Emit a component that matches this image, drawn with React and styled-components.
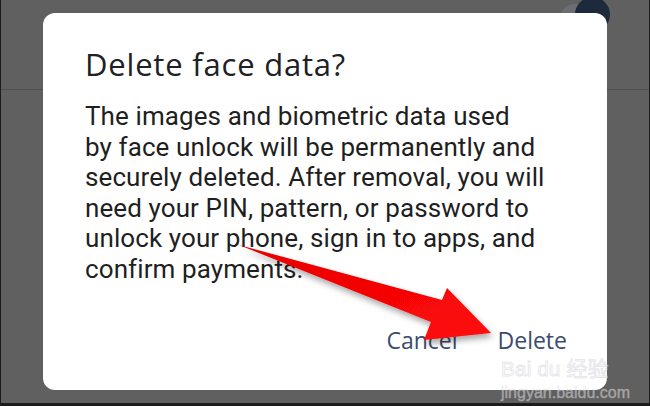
import React from "react";
import styled, { createGlobalStyle } from "styled-components";

const GlobalStyle = createGlobalStyle`
  html, body {
    margin: 0;
    padding: 0;
    background: #5f5f5f;
  }
  * { box-sizing: border-box; }
`;

const Screen = styled.div`
  position: relative;
  width: 650px;
  height: 406px;
  overflow: hidden;
  background: #606060;
  border: 1px solid #1c1c1c;
  border-top: none;
  border-bottom-width: 3px;
  font-family: Roboto, "Liberation Sans", sans-serif;
`;

const SettingsRow = styled.div`
  height: 90px;
  border-bottom: 1px solid #4f4f4f;
`;

const ToggleTrack = styled.div`
  position: absolute;
  top: 4px;
  left: 560px;
  width: 42px;
  height: 26px;
  border-radius: 13px;
  background: #6b6d71;
`;

const ToggleThumb = styled.div`
  position: absolute;
  top: -3px;
  left: 574px;
  width: 35px;
  height: 35px;
  border-radius: 50%;
  background: #1d2a3b;
`;

const Scrim = styled.div`
  position: absolute;
  inset: 0;
  display: flex;
  padding: 13px 42px 13px 42px;
`;

const Dialog = styled.div`
  flex: 1;
  background: #ffffff;
  border-radius: 12px;
  padding: 33px 40px 0 42px;
  display: flex;
  flex-direction: column;
`;

const Title = styled.h2`
  margin: 0;
  font-family: "Open Sans", Roboto, sans-serif;
  font-weight: 400;
  font-size: 31px;
  line-height: 36px;
  color: #202124;
  letter-spacing: 0.8px;
`;

const Body = styled.p`
  margin: 19px 0 0;
  font-size: 26px;
  line-height: 30.6px;
  color: #1f1f1f;
  letter-spacing: 0.1px;
`;

const Actions = styled.div`
  display: flex;
  justify-content: flex-end;
  gap: 40px;
  margin-top: 41px;
`;

const ActionButton = styled.button`
  border: none;
  background: none;
  padding: 0;
  font-family: "Open Sans", Roboto, sans-serif;
  font-weight: 500;
  font-size: 23px;
  line-height: 28px;
  color: #3c4b6e;
`;

const ArrowLayer = styled.svg`
  position: absolute;
  inset: 0;
  pointer-events: none;
`;

const Watermark = styled.div`
  position: absolute;
  left: 500px;
  top: 358px;
  display: flex;
  flex-direction: column;
  align-items: flex-start;
  color: rgba(255, 255, 255, 0.4);
  -webkit-text-stroke: 1px rgba(200, 200, 210, 0.45);
  pointer-events: none;
`;

const WatermarkLogo = styled.span`
  font-family: "Liberation Sans", "Noto Sans CJK SC", sans-serif;
  font-size: 21px;
  line-height: 22px;
`;

const WatermarkUrl = styled.span`
  font-family: "Liberation Sans", sans-serif;
  font-size: 16px;
  line-height: 16px;
  margin-top: 5px;
  -webkit-text-stroke: 0.5px rgba(200, 200, 210, 0.5);
`;

export default function App() {
  return (
    <>
      <GlobalStyle />
      <Screen>
        <SettingsRow />
        <ToggleTrack />
        <ToggleThumb />
        <Scrim>
          <Dialog>
            <Title>Delete face data?</Title>
            <Body>
              The images and biometric data used
              <br />
              by face unlock will be permanently and
              <br />
              securely deleted. After removal, you will
              <br />
              need your PIN, pattern, or password to
              <br />
              unlock your phone, sign in to apps, and
              <br />
              confirm payments.
            </Body>
            <Actions>
              <ActionButton>Cancel</ActionButton>
              <ActionButton>Delete</ActionButton>
            </Actions>
          </Dialog>
        </Scrim>
        <ArrowLayer width="650" height="406" viewBox="0 0 650 406">
          <defs>
            <filter id="arrowShadow" x="-20%" y="-20%" width="140%" height="140%">
              <feDropShadow dx="2" dy="4" stdDeviation="3" floodColor="#000" floodOpacity="0.35" />
            </filter>
            <linearGradient id="arrowFill" x1="0" y1="0" x2="1" y2="1">
              <stop offset="0" stopColor="#e80000" />
              <stop offset="1" stopColor="#ff0a0a" />
            </linearGradient>
          </defs>
          <polygon
            points="238,245 441,300 446,288 490,333 423,340 430,322"
            fill="url(#arrowFill)"
            filter="url(#arrowShadow)"
          />
        </ArrowLayer>
        <Watermark>
          <WatermarkLogo>Bai du 经验</WatermarkLogo>
          <WatermarkUrl>jingyan.baidu.com</WatermarkUrl>
        </Watermark>
      </Screen>
    </>
  );
}
